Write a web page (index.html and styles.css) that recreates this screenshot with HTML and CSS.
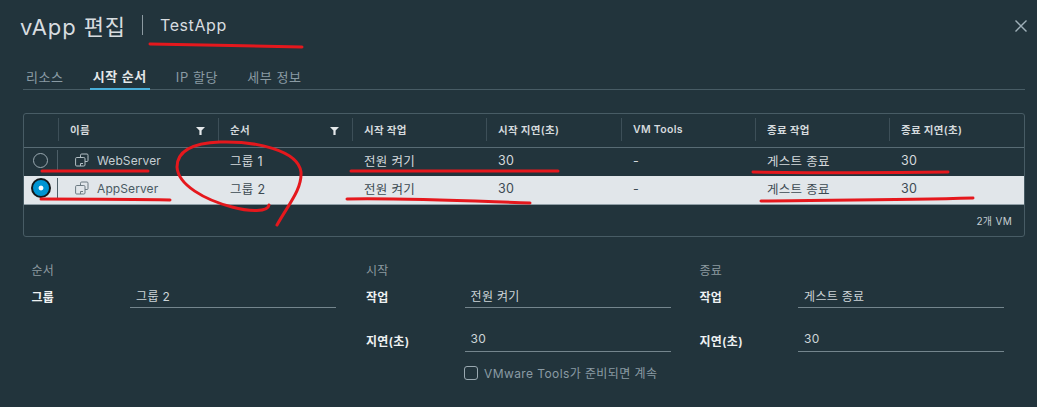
FILE: index.html
```html
<!DOCTYPE html>
<html lang="ko">
<head>
<meta charset="UTF-8">
<meta name="viewport" content="width=device-width, initial-scale=1.0">
<title>vApp 편집</title>
<link rel="stylesheet" href="styles.css">
</head>
<body>
<div class="dialog">
    <div class="dialog-header">
        <h1 class="dialog-title">vApp 편집</h1>
        <span class="dialog-sep"></span>
        <span class="dialog-name">TestApp</span>
        <svg class="close-icon" width="14" height="14" viewBox="0 0 14 14"><path d="M1.5 1.5 12.5 12.5M12.5 1.5 1.5 12.5"/></svg>
    </div>

    <div class="tabs">
        <span class="tab">리소스</span>
        <span class="tab tab-active">시작 순서</span>
        <span class="tab">IP 할당</span>
        <span class="tab">세부 정보</span>
    </div>

    <div class="grid-box">
        <div class="row row-head">
            <div class="cell"></div>
            <div class="cell cell-filter">이름
                <svg class="filter-icon" width="9" height="8" viewBox="0 0 9 8"><path d="M0 0H9L5.6 3.6V8H3.4V3.6Z"/></svg>
            </div>
            <div class="cell cell-filter">순서
                <svg class="filter-icon" width="9" height="8" viewBox="0 0 9 8"><path d="M0 0H9L5.6 3.6V8H3.4V3.6Z"/></svg>
            </div>
            <div class="cell">시작 작업</div>
            <div class="cell">시작 지연(초)</div>
            <div class="cell">VM Tools</div>
            <div class="cell">종료 작업</div>
            <div class="cell">종료 지연(초)</div>
        </div>
        <div class="row row-body">
            <div class="cell cell-radio"><span class="radio"></span></div>
            <div class="cell cell-name">
                <svg class="vm-icon" width="14" height="14" viewBox="0 0 14 14"><path d="M5.5 4V2.2Q5.5 1 6.7 1H12Q13 1 13 2.2V7.5Q13 8.5 12 8.5H10M1.7 4.5H8.8Q10 4.5 10 5.7V12Q10 13 8.8 13H1.7Q.6 13 .6 12V5.7Q.6 4.5 1.7 4.5ZM5.5 10.5V13M5.5 10.5H8"/></svg>
                WebServer
            </div>
            <div class="cell">그룹 1</div>
            <div class="cell">전원 켜기</div>
            <div class="cell">30</div>
            <div class="cell">-</div>
            <div class="cell">게스트 종료</div>
            <div class="cell">30</div>
        </div>
        <div class="row row-body row-selected">
            <div class="cell cell-radio"><span class="radio radio-on"></span></div>
            <div class="cell cell-name">
                <svg class="vm-icon" width="14" height="14" viewBox="0 0 14 14"><path d="M5.5 4V2.2Q5.5 1 6.7 1H12Q13 1 13 2.2V7.5Q13 8.5 12 8.5H10M1.7 4.5H8.8Q10 4.5 10 5.7V12Q10 13 8.8 13H1.7Q.6 13 .6 12V5.7Q.6 4.5 1.7 4.5ZM5.5 10.5V13M5.5 10.5H8"/></svg>
                AppServer
            </div>
            <div class="cell">그룹 2</div>
            <div class="cell">전원 켜기</div>
            <div class="cell">30</div>
            <div class="cell">-</div>
            <div class="cell">게스트 종료</div>
            <div class="cell">30</div>
        </div>
        <div class="grid-footer">2개 VM</div>
    </div>

    <div class="details">
        <div class="detail-col">
            <div class="detail-heading">순서</div>
            <div class="field">
                <label class="field-label">그룹</label>
                <div class="field-value">그룹 2</div>
            </div>
        </div>
        <div class="detail-col">
            <div class="detail-heading">시작</div>
            <div class="field">
                <label class="field-label">작업</label>
                <div class="field-value">전원 켜기</div>
            </div>
            <div class="field">
                <label class="field-label">지연(초)</label>
                <div class="field-value">30</div>
            </div>
            <div class="check-row">
                <span class="checkbox"></span>
                VMware Tools가 준비되면 계속
            </div>
        </div>
        <div class="detail-col">
            <div class="detail-heading">종료</div>
            <div class="field">
                <label class="field-label">작업</label>
                <div class="field-value">게스트 종료</div>
            </div>
            <div class="field">
                <label class="field-label">지연(초)</label>
                <div class="field-value">30</div>
            </div>
        </div>
    </div>
</div>

<!-- red pen marks drawn over the screenshot -->
<svg class="pen-marks" width="1037" height="407" viewBox="0 0 1037 407">
    <path d="M150 44C195 45 255 46 302 47"/>
    <path d="M42 171H148"/>
    <path d="M41 199C85 199 130 199 170 200"/>
    <path d="M269 205C268 212 250 212 232 207C205 200 178 185 177 167C177 150 195 143 220 142C255 141 298 150 301 172C302 190 288 205 277 225"/>
    <path d="M351 171H558"/>
    <path d="M347 199C410 198 470 201 530 203"/>
    <path d="M753 172C820 173 885 173 948 172"/>
    <path d="M761 201C830 200 900 200 973 198"/>
</svg>
</body>
</html>
```

FILE: styles.css
```css
html, body {
    margin: 0;
    padding: 0;
    height: 407px;
    overflow: hidden;
}
body {
    position: relative;
    background-color: #22343c;
    color: #d5dadd;
    font-family: "Inter", "Noto Sans CJK KR", sans-serif;
    font-size: 12px;
    letter-spacing: 0.3px;
}
.dialog {
    padding: 0 12px 0 23px;
}

/* header */
.dialog-header {
    display: flex;
    align-items: center;
    height: 50px;
    margin-left: -3px;
}
.dialog-title {
    margin: 0;
    font-size: 22px;
    font-weight: 400;
    letter-spacing: 0.9px;
    color: #d8dde0;
}
.dialog-sep {
    width: 1px;
    height: 20px;
    margin: 0 17px 0 16px;
    background-color: #8c9aa1;
}
.dialog-name {
    font-size: 16px;
    letter-spacing: 0.6px;
    color: #d8dde0;
}
.close-icon {
    margin-left: auto;
    margin-right: -3px;
    margin-top: 2px;
    fill: none;
    stroke: #9fb0b9;
    stroke-width: 1.4;
}

/* tabs */
.tabs {
    display: flex;
    gap: 26px;
    height: 40px;
    box-sizing: border-box;
    border-bottom: 1px solid #485c65;
    padding-left: 3px;
    font-size: 13px;
    letter-spacing: 0.6px;
}
.tab {
    display: flex;
    align-items: center;
    height: 40px;
    padding: 12px 0 0;
    box-sizing: border-box;
    color: #8a9ba4;
}
.tab:last-child {
    margin-left: 3px;
}
.tab-active {
    padding: 12px 3px 0;
    border-bottom: 2px solid #49afd9;
    color: #e4e8ea;
    font-weight: 600;
}

/* table */
.grid-box {
    margin-top: 23px;
    height: 124px;
    box-sizing: border-box;
    border: 1px solid #485c65;
    border-radius: 3px;
    display: flex;
    flex-direction: column;
}
.row {
    display: grid;
    grid-template-columns: 34px 160px 134px 134px 135px 134px 134px 1fr;
}
.row-head {
    height: 34px;
    box-sizing: border-box;
    padding-bottom: 2px;
    align-items: center;
    border-bottom: 1px solid #586b74;
    font-size: 10.5px;
    font-weight: 600;
    color: #d5dadd;
}
.row-head .cell {
    height: 23px;
    padding-left: 11px;
    border-left: 1px solid #3d4f58;
}
.row-head .cell:first-child {
    border-left: none;
}
.row-body {
    height: 28px;
    box-sizing: border-box;
    padding-bottom: 4px;
    align-items: center;
    font-size: 12.5px;
}
.row-selected {
    height: 29px;
    background-color: #e1e6ea;
    border-bottom: 1px solid #8f9ea6;
    color: #3c4a52;
}
.cell {
    display: flex;
    align-items: center;
    box-sizing: border-box;
    padding-left: 12px;
}
.cell-filter {
    justify-content: space-between;
    padding-right: 13px;
}
.filter-icon {
    fill: #e4e8ea;
    margin-top: 3px;
}
.cell-radio {
    padding-left: 0;
    height: 20px;
    justify-content: center;
    border-right: 1px solid #4d5f68;
}
.radio {
    width: 15px;
    height: 15px;
    box-sizing: border-box;
    border: 1px solid #9aa9b1;
    border-radius: 50%;
}
.radio-on {
    width: 20px;
    height: 20px;
    border: 2px solid #14181a;
    background: radial-gradient(circle, #fff 0 2px, #0095d3 2.8px);
}
.cell-name {
    padding-left: 17px;
    gap: 8px;
    font-size: 12px;
    letter-spacing: 0.1px;
    color: #c5ced3;
}
.row-selected .cell-name {
    color: #4a5a63;
}
.vm-icon {
    fill: none;
    stroke: #b3bfc5;
    stroke-width: 1;
}
.row-selected .vm-icon {
    stroke: #6c7a82;
}
.grid-footer {
    flex: 1;
    display: flex;
    align-items: center;
    justify-content: flex-end;
    padding-right: 12px;
    font-size: 10px;
    color: #c5ced3;
}

/* lower form */
.details {
    display: grid;
    grid-template-columns: 334.5px 333.5px 1fr;
    margin: 24px 0 0 8.4px;
}
.detail-heading {
    height: 25px;
    color: #8d9aa0;
}
.field {
    display: flex;
    height: 44px;
}
.field-label {
    width: 98.7px;
    padding-top: 2px;
    font-weight: 600;
    color: #eef1f2;
}
.field-value {
    width: 206px;
    height: 22px;
    padding: 1px 0 0 6px;
    box-sizing: border-box;
    border-bottom: 1px solid #74858d;
    color: #cdd4d8;
}
.check-row {
    display: flex;
    align-items: center;
    gap: 6px;
    margin: -10px 0 0 98.2px;
    letter-spacing: 0.4px;
    color: #8a9ba4;
}
.checkbox {
    width: 14px;
    height: 14px;
    box-sizing: border-box;
    border: 1px solid #9aa9b1;
    border-radius: 3px;
}

/* annotation layer */
.pen-marks {
    position: absolute;
    left: 0;
    top: 0;
    fill: none;
    stroke: #e5181d;
    stroke-width: 3;
    stroke-linecap: round;
    pointer-events: none;
}
```
